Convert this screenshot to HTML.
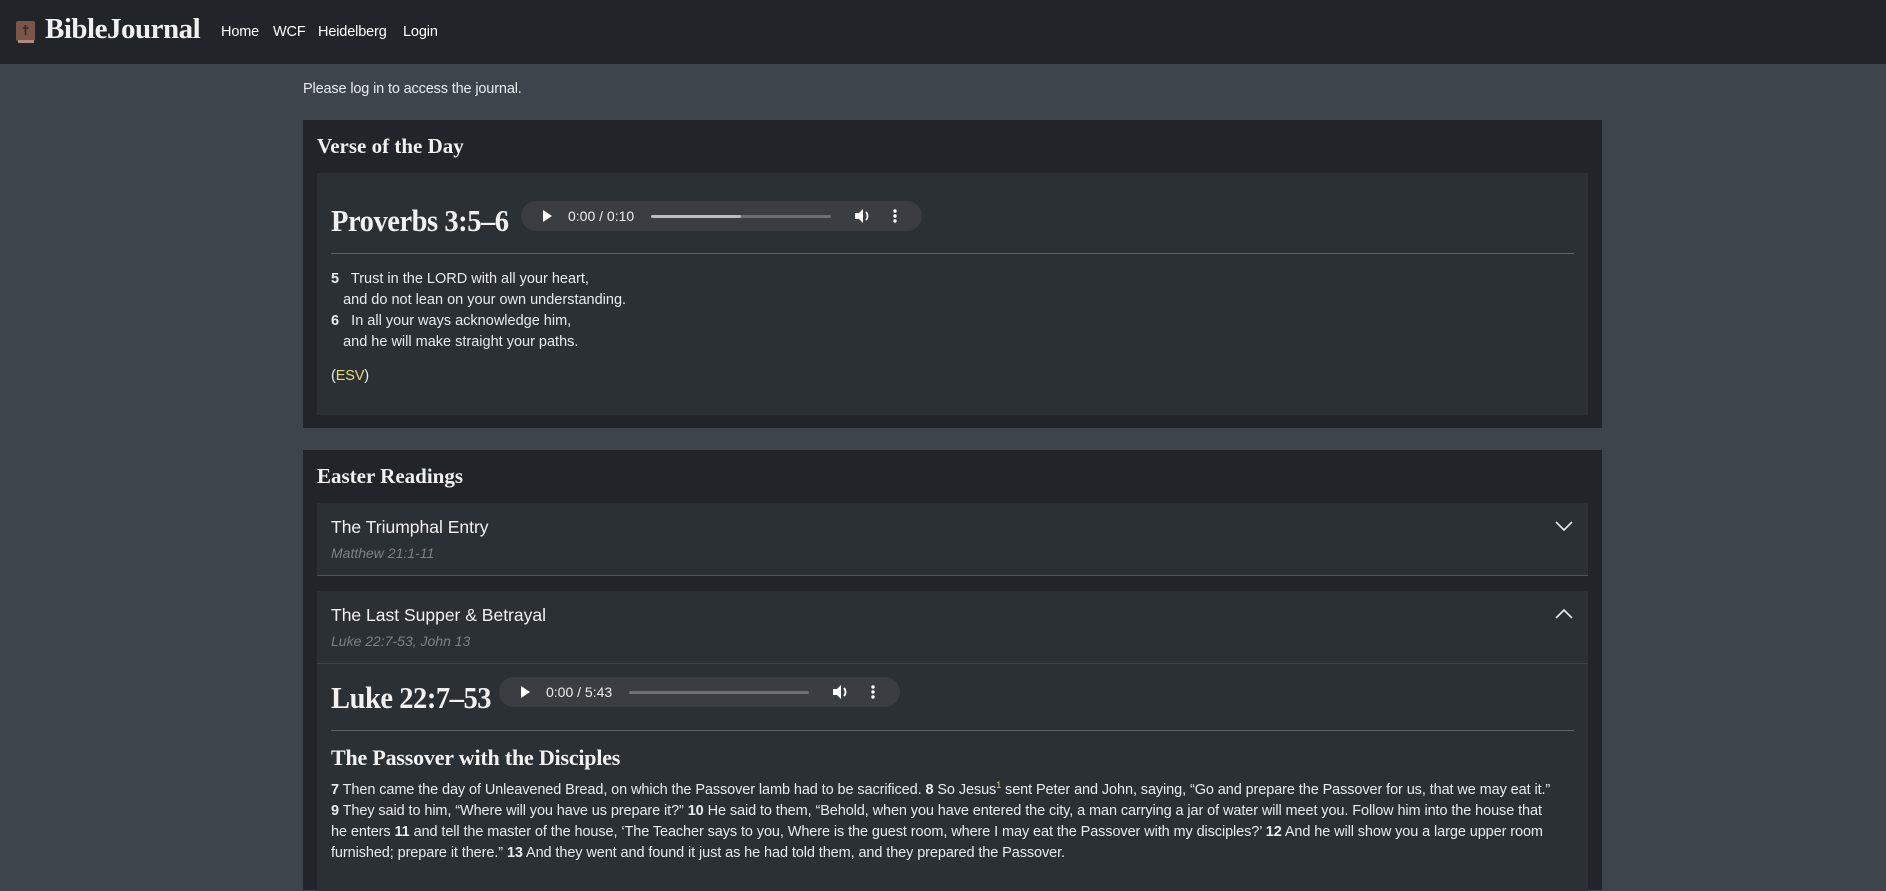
<!DOCTYPE html>
<html><head><meta charset="utf-8"><style>
*{box-sizing:border-box;margin:0;padding:0}
body{width:1886px;height:883px;overflow:hidden;background:#3d444b;font-family:"Liberation Sans",sans-serif;color:#dee2e6;position:relative}
.a{position:absolute}
.nav{left:0;top:0;width:1886px;height:64px;background:#212529}
.serif{font-family:"Liberation Serif",serif;font-weight:bold;color:#f1f1f1}
.big{transform:scaleX(0.92);transform-origin:left;letter-spacing:-0.5px}
.card{background:#212529}
.inner{background:#2b3035}
.pill{background:#3a3e43;border-radius:15px;height:30px;color:#eee;font-size:14px}
.hr{height:1px;background:#5d6368}
.t{font-size:14.5px;letter-spacing:-0.15px;color:#e9ecef;white-space:nowrap}
</style></head><body>
<div class="a nav"></div>
<svg class="a" style="left:15px;top:20px" width="22" height="24" viewBox="0 0 22 24"><rect x="1" y="1" width="19" height="20" rx="2" fill="#7a5548"/><rect x="3" y="20" width="16" height="3" fill="#a98b80"/><path d="M10.5 5v10M7.5 8h6" stroke="#3a2620" stroke-width="1.6"/></svg>
<div class="a serif" style="left:45px;top:13px;font-size:29px;letter-spacing:-0.5px">BibleJournal</div>
<div class="a t" style="left:221px;top:24px;color:#fff">Home</div>
<div class="a t" style="left:273px;top:24px;color:#fff">WCF</div>
<div class="a t" style="left:318px;top:24px;color:#fff">Heidelberg</div>
<div class="a t" style="left:403px;top:24px;color:#fff">Login</div>
<div class="a t" style="left:303px;top:81px">Please log in to access the journal.</div>

<div class="a card" style="left:303px;top:120px;width:1299px;height:308px"></div>
<div class="a serif" style="left:317px;top:134px;font-size:21px">Verse of the Day</div>
<div class="a inner" style="left:317px;top:173px;width:1271px;height:242px"></div>
<div class="a serif big" style="left:331px;top:203px;font-size:31px">Proverbs 3:5–6</div>
<div class="a pill" style="left:521px;top:201px;width:401px"></div>
<svg class="a" style="left:540px;top:208px" width="360" height="16"><path d="M3 2l9 6-9 6z" fill="#fff"/><text x="28" y="13" fill="#eee" font-size="14" font-family="Liberation Sans">0:00 / 0:10</text><rect x="111" y="7" width="180" height="3" rx="1.5" fill="#6c6f73"/><rect x="111" y="7" width="90" height="3" rx="1.5" fill="#bbb"/><path d="M315 5h4l4-4v14l-4-4h-4z" fill="#fff"/><path d="M326 4a6 6 0 0 1 0 8" stroke="#fff" stroke-width="1.8" fill="none"/><circle cx="355" cy="3" r="1.7" fill="#fff"/><circle cx="355" cy="8" r="1.7" fill="#fff"/><circle cx="355" cy="13" r="1.7" fill="#fff"/></svg>
<div class="a hr" style="left:331px;top:253px;width:1243px"></div>
<div class="a t" style="left:331px;top:269px;line-height:21px;letter-spacing:0"><b>5</b>&nbsp;&nbsp; Trust in the LORD with all your heart,<br>&nbsp;&nbsp;&nbsp;and do not lean on your own understanding.<br><b>6</b>&nbsp;&nbsp; In all your ways acknowledge him,<br>&nbsp;&nbsp;&nbsp;and he will make straight your paths.</div>
<div class="a t" style="left:331px;top:368px">(<span style="color:#e6d97a">ESV</span>)</div>

<div class="a card" style="left:303px;top:450px;width:1299px;height:440px"></div>
<div class="a serif" style="left:317px;top:464px;font-size:21px">Easter Readings</div>
<div class="a inner" style="left:317px;top:503px;width:1271px;height:73px;border-bottom:1px solid #4f555a"></div>
<div class="a" style="left:331px;top:517px;font-size:17.5px;color:#f1f1f1">The Triumphal Entry</div>
<div class="a" style="left:331px;top:545px;font-size:14px;font-style:italic;color:#7d8287">Matthew 21:1-11</div>
<svg class="a" style="left:1555px;top:520px" width="18" height="12"><path d="M1 2l8 8 8-8" stroke="#eee" stroke-width="1.6" fill="none"/></svg>
<div class="a inner" style="left:317px;top:591px;width:1271px;height:300px"></div>
<div class="a" style="left:331px;top:605px;font-size:17.5px;color:#f1f1f1">The Last Supper &amp; Betrayal</div>
<div class="a" style="left:331px;top:633px;font-size:14px;font-style:italic;color:#7d8287">Luke 22:7-53, John 13</div>
<svg class="a" style="left:1555px;top:608px" width="18" height="12"><path d="M1 10l8-8 8 8" stroke="#eee" stroke-width="1.6" fill="none"/></svg>
<div class="a" style="left:317px;top:663px;width:1271px;height:1px;background:#3d4349"></div>
<div class="a serif big" style="left:331px;top:680px;font-size:31px">Luke 22:7–53</div>
<div class="a pill" style="left:499px;top:677px;width:401px"></div>
<svg class="a" style="left:518px;top:684px" width="370" height="16"><path d="M3 2l9 6-9 6z" fill="#fff"/><text x="28" y="13" fill="#eee" font-size="14" font-family="Liberation Sans">0:00 / 5:43</text><rect x="111" y="7" width="180" height="3" rx="1.5" fill="#6c6f73"/><path d="M315 5h4l4-4v14l-4-4h-4z" fill="#fff"/><path d="M326 4a6 6 0 0 1 0 8" stroke="#fff" stroke-width="1.8" fill="none"/><circle cx="355" cy="3" r="1.7" fill="#fff"/><circle cx="355" cy="8" r="1.7" fill="#fff"/><circle cx="355" cy="13" r="1.7" fill="#fff"/></svg>
<div class="a hr" style="left:331px;top:730px;width:1243px"></div>
<div class="a serif" style="left:331px;top:745px;font-size:22px;letter-spacing:-0.2px">The Passover with the Disciples</div>
<div class="a" style="left:331px;top:775px;white-space:nowrap;font-size:14.5px;letter-spacing:-0.1px;line-height:21px;color:#e9ecef"><b>7</b> Then came the day of Unleavened Bread, on which the Passover lamb had to be sacrificed. <b>8</b> So Jesus<sup style="color:#e6d97a;font-size:9px">1</sup> sent Peter and John, saying, “Go and prepare the Passover for us, that we may eat it.”<br><b>9</b> They said to him, “Where will you have us prepare it?” <b>10</b> He said to them, “Behold, when you have entered the city, a man carrying a jar of water will meet you. Follow him into the house that<br>he enters <b>11</b> and tell the master of the house, ‘The Teacher says to you, Where is the guest room, where I may eat the Passover with my disciples?’ <b>12</b> And he will show you a large upper room<br>furnished; prepare it there.” <b>13</b> And they went and found it just as he had told them, and they prepared the Passover.</div>
</body></html>
